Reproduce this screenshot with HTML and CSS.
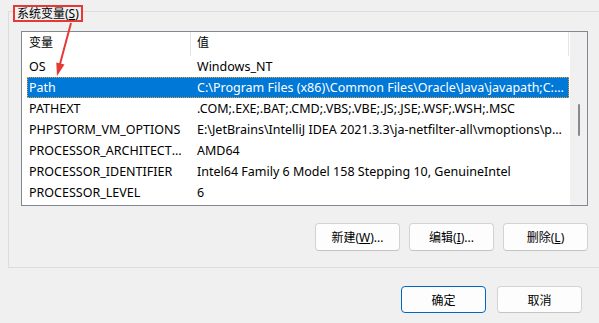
FILE: index.html
```html
<!DOCTYPE html>
<html>
  <head>
    <title>环境变量</title>
    <meta charset="UTF-8">
    <link rel="stylesheet" href="styles.css">
  </head>
  <body>
    <div class="group">
      <div class="legend">系统变量(<u>S</u>)</div>
      <div class="list">
        <div class="table">
          <div class="head">
            <div class="name">变量</div>
            <div class="value">值</div>
          </div>
          <div class="row"><div class="name">OS</div><div class="value">Windows_NT</div></div>
          <div class="row selected"><div class="name">Path</div><div class="value">C:\Program Files (x86)\Common Files\Oracle\Java\javapath;C:\WINDOWS\system32;C:\WINDOWS</div></div>
          <div class="row"><div class="name">PATHEXT</div><div class="value">.COM;.EXE;.BAT;.CMD;.VBS;.VBE;.JS;.JSE;.WSF;.WSH;.MSC</div></div>
          <div class="row"><div class="name">PHPSTORM_VM_OPTIONS</div><div class="value">E:\JetBrains\IntelliJ IDEA 2021.3.3\ja-netfilter-all\vmoptions\phpstorm.vmoptions</div></div>
          <div class="row"><div class="name">PROCESSOR_ARCHITECTURE</div><div class="value">AMD64</div></div>
          <div class="row"><div class="name">PROCESSOR_IDENTIFIER</div><div class="value">Intel64 Family 6 Model 158 Stepping 10, GenuineIntel</div></div>
          <div class="row"><div class="name">PROCESSOR_LEVEL</div><div class="value">6</div></div>
        </div>
        <div class="scroll"><div class="thumb"></div></div>
      </div>
      <div class="actions">
        <button>新建(<u>W</u>)...</button>
        <button>编辑(<u>I</u>)...</button>
        <button>删除(<u>L</u>)</button>
      </div>
    </div>
    <div class="footer">
      <button class="primary">确定</button>
      <button>取消</button>
    </div>
    <!-- annotation arrow pointing at Path -->
    <svg class="arrow" width="80" height="80" viewBox="0 0 80 80">
      <line x1="71" y1="23" x2="60" y2="64" stroke="#e53935" stroke-width="2"/>
      <polygon points="57,76 64.5,64.5 56.3,62.4" fill="#e53935"/>
    </svg>
  </body>
</html>
```

FILE: styles.css
```css
body {
  margin: 0;
  background: #f0f0f0;
  font-family: 'Noto Sans', 'Noto Sans CJK SC', sans-serif;
  font-size: 12px;
  color: #000;
  overflow: hidden;
  position: relative;
  height: 323px;
}
.group {
  position: relative;
  box-sizing: border-box;
  margin: 11px 0 0 8px;
  width: 620px;
  height: 257px;
  padding: 19px 0 0 12px;
  border: 1px solid #dcdcdc;
}
.legend {
  position: absolute;
  left: 4px;
  top: -7px;
  padding: 0 2px;
  line-height: 13px;
  border: 2px solid #e53935;
  background: #f0f0f0;
}
.list {
  display: flex;
  box-sizing: border-box;
  width: 567px;
  height: 175px;
  border: 1px solid #828790;
  background: #fff;
}
.table {
  flex: 1;
  min-width: 0;
  overflow: hidden;
}
.head {
  display: flex;
  height: 24px;
  line-height: 22px;
}
.head .name {
  width: 161px;
  padding-left: 7px;
  border-right: 1px solid #e5e5e5;
}
.head .value {
  flex: 1;
  padding-left: 6px;
  border-right: 1px solid #e5e5e5;
}
.row {
  display: flex;
  box-sizing: border-box;
  height: 21px;
  line-height: 21px;
  margin-left: 5px;
  font-size: 12.5px;
  white-space: nowrap;
}
.row .name {
  width: 161px;
  padding-left: 2px;
  overflow: hidden;
  text-overflow: ellipsis;
}
.row .value {
  flex: 1;
  min-width: 0;
  padding: 0 3px 0 7px;
  overflow: hidden;
  text-overflow: ellipsis;
}
.row.selected {
  background: #0078d7;
  color: #fff;
  outline: 1px dotted #f0a030;
  outline-offset: -1px;
}
.scroll {
  width: 17px;
  background: #f0f0f0;
  border-left: 1px solid #fff;
}
.thumb {
  width: 2px;
  height: 32px;
  margin: 72px 0 0 8px;
  background: #8a8a8a;
  border-radius: 1px;
}
.actions {
  display: flex;
  justify-content: flex-end;
  gap: 9px;
  width: 567px;
  margin-top: 17px;
}
button {
  box-sizing: border-box;
  width: 85px;
  height: 28px;
  padding: 0;
  font: inherit;
  color: #000;
  background: #fdfdfd;
  border: 1px solid #d3d3d3;
  border-bottom-color: #c4c4c4;
  border-radius: 4px;
}
.footer {
  display: flex;
  justify-content: flex-end;
  gap: 11px;
  padding-right: 17px;
  margin-top: 18px;
}
.footer button {
  height: 27px;
}
.footer .primary {
  border: 1px solid #0067c0;
}
.arrow {
  position: absolute;
  left: 0;
  top: 0;
}
```
